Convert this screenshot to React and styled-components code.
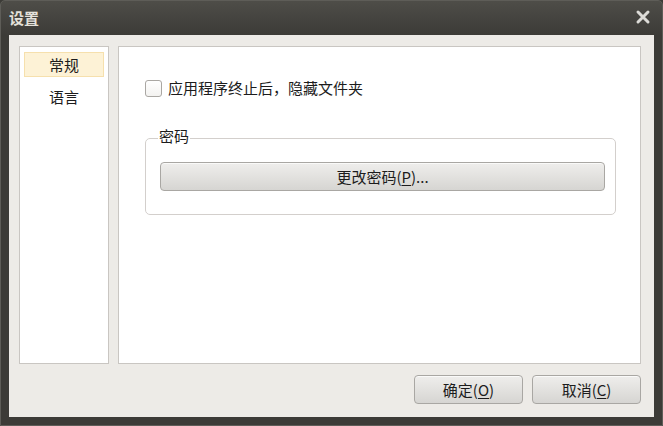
import React, { useState } from "react";
import styled, { createGlobalStyle } from "styled-components";

const GlobalStyle = createGlobalStyle`
  html, body {
    margin: 0;
    padding: 0;
    background: #3c3b37;
  }
  body {
    font-family: "Noto Sans CJK SC", "Noto Sans", sans-serif;
  }
`;

const Window = styled.div`
  width: 663px;
  height: 426px;
  box-sizing: border-box;
  display: flex;
  flex-direction: column;
  padding: 0 8px 8px 8px;
  border: 1px solid #5e5d58;
  border-radius: 5px 5px 0 0;
  background: linear-gradient(#4e4d48, #3c3b37 34px);
`;

const TitleBar = styled.div`
  height: 34px;
  flex: none;
  display: flex;
  align-items: center;
  justify-content: space-between;
  color: #e4e1da;
`;

const Title = styled.span`
  font-size: 15px;
  font-weight: bold;
  line-height: 1;
  margin-top: -2px;
`;

const CloseButton = styled.button`
  border: none;
  background: none;
  padding: 0;
  margin: -2px 3px 0 0;
  width: 16px;
  height: 16px;
  display: flex;
  cursor: pointer;
`;

const Client = styled.div`
  flex: 1;
  display: flex;
  flex-direction: column;
  background: #edebe7;
  padding: 11px 13px 13px 10px;
  gap: 11px;
  min-height: 0;
`;

const Panes = styled.div`
  flex: 1;
  display: flex;
  gap: 9px;
  min-height: 0;
`;

const Pane = styled.div`
  background: #fff;
  border: 1px solid #c9c6c2;
  box-sizing: border-box;
`;

const PageList = styled(Pane)`
  width: 90px;
  flex: none;
  display: flex;
  flex-direction: column;
  gap: 7px;
  padding: 5px 4px;
`;

const PageItem = styled.div`
  height: 25px;
  display: flex;
  align-items: center;
  justify-content: center;
  font-size: 15px;
  color: #1c1c1c;
  box-sizing: border-box;
  border: 1px solid ${(p) => (p.$active ? "#f6e0ad" : "transparent")};
  background: ${(p) => (p.$active ? "#fdf2d6" : "transparent")};
  cursor: default;
`;

const PageBody = styled(Pane)`
  flex: 1;
  padding: 30px 24px 0 26px;
  display: flex;
  flex-direction: column;
  gap: 29px;
`;

const CheckRow = styled.label`
  display: flex;
  align-items: center;
  gap: 6px;
  font-size: 15px;
  line-height: 22px;
  color: #1c1c1c;
  cursor: default;
`;

const Box = styled.span`
  width: 17px;
  height: 17px;
  box-sizing: border-box;
  border: 1px solid #aaa7a3;
  border-radius: 3px;
  background: linear-gradient(#ffffff, #f3f2f0);
  display: flex;
  align-items: center;
  justify-content: center;
`;

const Group = styled.fieldset`
  margin: 0;
  border: 1px solid #d3cfcc;
  border-radius: 5px;
  padding: 14px 10px 23px 14px;
`;

const GroupTitle = styled.legend`
  font-size: 15px;
  color: #1c1c1c;
  padding: 0 1px 5px 1px;
  margin-left: -2px;
  line-height: 15px;
`;

const PushButton = styled.button`
  height: 29px;
  box-sizing: border-box;
  font-family: inherit;
  font-size: 15px;
  color: #1c1c1c;
  border: 1px solid #a9a7a3;
  border-radius: 4px;
  background: linear-gradient(#efeeec, #d6d5d2);
  box-shadow: inset 0 1px 0 rgba(255, 255, 255, 0.7);
  padding: 0;
  cursor: pointer;
  width: ${(p) => p.$width || "auto"};
`;

const ButtonRow = styled.div`
  display: flex;
  justify-content: flex-end;
  gap: 9px;
`;

const Key = styled.span`
  text-decoration: underline;
  text-underline-offset: 2px;
`;

export default function App() {
  const [page, setPage] = useState(0);
  const [hideFolder, setHideFolder] = useState(false);
  const pages = ["常规", "语言"];

  return (
    <>
      <GlobalStyle />
      <Window>
        <TitleBar>
          <Title>设置</Title>
          <CloseButton aria-label="关闭">
            <svg width="16" height="16" viewBox="0 0 16 16">
              <path
                d="M3 3 L13 13 M13 3 L3 13"
                stroke="#dcdbd7"
                strokeWidth="3"
                strokeLinecap="round"
              />
            </svg>
          </CloseButton>
        </TitleBar>
        <Client>
          <Panes>
            <PageList>
              {pages.map((name, i) => (
                <PageItem key={name} $active={page === i} onClick={() => setPage(i)}>
                  {name}
                </PageItem>
              ))}
            </PageList>
            <PageBody>
              <CheckRow onClick={() => setHideFolder(!hideFolder)}>
                <Box>
                  {hideFolder && (
                    <svg width="11" height="11" viewBox="0 0 11 11">
                      <path d="M1.5 5.5 L4.5 8.5 L9.5 2" fill="none" stroke="#333" strokeWidth="1.8" />
                    </svg>
                  )}
                </Box>
                应用程序终止后，隐藏文件夹
              </CheckRow>
              <Group>
                <GroupTitle>密码</GroupTitle>
                <PushButton $width="100%">
                  更改密码(<Key>P</Key>)...
                </PushButton>
              </Group>
            </PageBody>
          </Panes>
          <ButtonRow>
            <PushButton $width="109px">
              确定(<Key>O</Key>)
            </PushButton>
            <PushButton $width="109px">
              取消(<Key>C</Key>)
            </PushButton>
          </ButtonRow>
        </Client>
      </Window>
    </>
  );
}
